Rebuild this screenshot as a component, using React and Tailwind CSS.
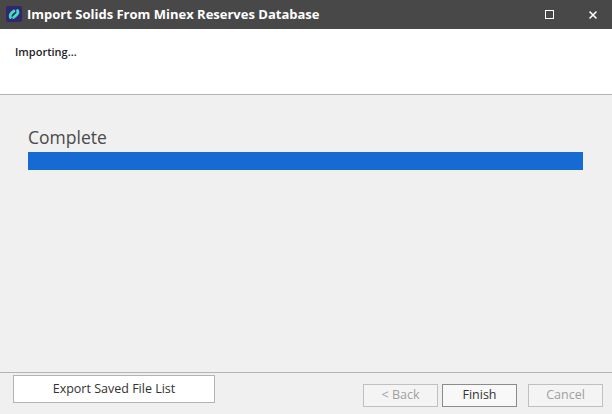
import { X } from "lucide-react";

const ui = { fontFamily: '"Open Sans", "Noto Sans", sans-serif' };

export default function App() {
  return (
    <div className="flex h-[414px] w-[612px] flex-col overflow-hidden bg-[#f0f0f0]" style={ui}>
      {/* Title bar */}
      <div className="flex h-[29px] items-center bg-[#484848] pl-[6px]">
        <svg width="16" height="16" viewBox="0 0 16 16" className="mb-[2px]">
          <rect width="16" height="16" rx="2" fill="#35246e" />
          <path
            d="M4.5 11.5 C3.5 9.5 4.5 7.5 8 5 M11.5 4.5 C13 6.5 11.5 8.5 7.5 11.5"
            fill="none"
            stroke="#3fe0c0"
            strokeWidth="2.8"
            strokeLinecap="round"
          />
        </svg>
        <span className="ml-[5px] text-[13px] font-bold text-white">
          Import Solids From Minex Reserves Database
        </span>
        <div className="ml-auto flex items-center">
          <div className="mr-[33px] h-[9px] w-[9px] border border-white" />
          <X size={12} strokeWidth={1.6} absoluteStrokeWidth className="mr-[13px] text-white" />
        </div>
      </div>

      {/* Header */}
      <div className="h-[66px] border-b border-[#b4b4b4] bg-white pl-[15px] pt-[15px]">
        <p className="text-[11px] leading-[16px] font-semibold text-[#222]">Importing…</p>
      </div>

      {/* Progress */}
      <div className="flex-1 pl-[28px] pr-[29px] pt-[30px]">
        <p className="text-[17.5px] leading-[25px] text-[#4a4a4a]">Complete</p>
        <div className="mt-[2px] h-[18px] w-full bg-[#166bd3]" />
      </div>

      {/* Footer */}
      <div className="flex h-[42px] items-start border-t border-[#b4b4b4] pl-[13px] pr-[9px] pt-[2px]">
        <button className="h-[28px] w-[202px] border border-[#b4b4b4] bg-white text-[12.5px] text-[#333]">
          Export Saved File List
        </button>
        <div className="ml-auto mt-[9px] flex">
          <button className="h-[23px] w-[75px] border border-[#c0c0c0] bg-[#f4f4f4] text-[12.5px] text-[#a0a0a0]">
            &lt; Back
          </button>
          <button className="ml-[4px] h-[23px] w-[75px] border border-[#8c8c8c] bg-[#f8f8f8] text-[12.5px] text-[#333]">
            Finish
          </button>
          <button className="ml-[11px] h-[23px] w-[75px] border border-[#c0c0c0] bg-[#f4f4f4] text-[12.5px] text-[#a0a0a0]">
            Cancel
          </button>
        </div>
      </div>
    </div>
  );
}
